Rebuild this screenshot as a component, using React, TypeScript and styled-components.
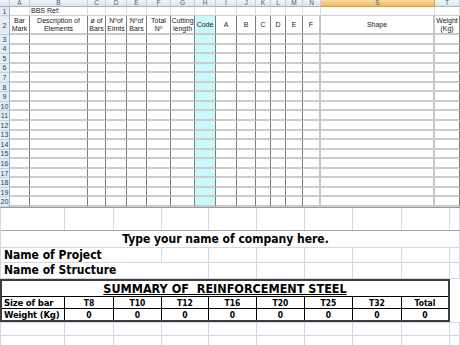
import React from 'react';
import styled, { createGlobalStyle } from 'styled-components';

const GlobalStyle = createGlobalStyle`
  html, body { margin: 0; padding: 0; background: #fff; }
  body {
    width: 460px;
    height: 345px;
    overflow: hidden;
    font-family: 'Liberation Sans', Arial, sans-serif;
  }
`;

interface ColDef {
  key: string;
  w: number;
  head: string[];
  code?: boolean;
  soft?: boolean;
  selected?: boolean;
}

const topCols: ColDef[] = [
  { key: 'A', w: 20, head: ['Bar', 'Mark'] },
  { key: 'B', w: 58, head: ['Description of', 'Elements'] },
  { key: 'C', w: 18, head: ['ø of', 'Bars'] },
  { key: 'D', w: 21, head: ['Nºof', 'Elmts'] },
  { key: 'E', w: 20, head: ['Nºof', 'Bars'] },
  { key: 'F', w: 24, head: ['Total', 'Nº'] },
  { key: 'G', w: 24, head: ['Cutting', 'length'] },
  { key: 'H', w: 21, head: ['Code'], code: true },
  { key: 'I', w: 21, head: ['A'] },
  { key: 'J', w: 19, head: ['B'] },
  { key: 'K', w: 15, head: ['C'] },
  { key: 'L', w: 15, head: ['D'] },
  { key: 'M', w: 17, head: ['E'] },
  { key: 'N', w: 18, head: ['F'], soft: true },
  { key: 'S', w: 114, head: ['Shape'], soft: true, selected: true },
  { key: 'T', w: 25, head: ['Weight', '(Kg)'] },
];

const dataRows = Array.from({ length: 18 }, (_, i) => i + 3);

const bars = ['T8', 'T10', 'T12', 'T16', 'T20', 'T25', 'T32', 'Total'];

const bottomCols = '64px 49px 48px 47px 48px 48px 48px 49px 48px 1fr';

const Sheet = styled.div`
  width: 460px;
  height: 345px;
  display: flex;
  flex-direction: column;
  overflow: hidden;
  background: #fff;
`;

/* ---------- top pane ---------- */

const TopPane = styled.div`
  display: grid;
  grid-template-columns: 10px ${topCols.map((c) => `${c.w}px`).join(' ')};
  grid-template-rows: 7px 9px 19px repeat(18, 1fr);
  height: 207px;
  flex: none;
`;

const ColHead = styled.div<{ $selected?: boolean }>`
  box-sizing: border-box;
  background: ${({ $selected }) =>
    $selected
      ? 'linear-gradient(#f9dba3, #f1b95b)'
      : 'linear-gradient(#f3f6fa, #dbe3ee)'};
  border-right: 1px solid ${({ $selected }) => ($selected ? '#e0a24a' : '#c3cedc')};
  border-bottom: 1px solid ${({ $selected }) => ($selected ? '#d99a3e' : '#9fb3cc')};
  color: #4a5d78;
  font-size: 6.5px;
  line-height: 6px;
  text-align: center;
`;

const RowHead = styled.div`
  box-sizing: border-box;
  background: #e4ebf5;
  border-right: 1px solid #9fb3cc;
  border-bottom: 1px solid #c4d0e0;
  color: #2b4262;
  font-size: 7px;
  display: flex;
  align-items: center;
  justify-content: center;
`;

const RefCell = styled.div`
  box-sizing: border-box;
  border-right: 1px solid #dcdcdc;
  border-bottom: 1px solid #cfcfcf;
  font-size: 7px;
  line-height: 8px;
  color: #222;
  white-space: nowrap;
  overflow: visible;
  padding-left: 1px;
`;

const HeadCell = styled.div<{ $code?: boolean; $soft?: boolean }>`
  box-sizing: border-box;
  background: ${({ $code }) => ($code ? '#c8fafa' : '#fff')};
  border-right: ${({ $soft }) => ($soft ? '2px solid #c6c6c6' : '1px solid #7d7d7d')};
  border-bottom: 2px solid #c9c9c9;
  font-size: 7px;
  line-height: 8px;
  color: #222;
  display: flex;
  flex-direction: column;
  align-items: center;
  justify-content: center;
  text-align: center;
  white-space: nowrap;
`;

const DataCell = styled.div<{ $code?: boolean; $soft?: boolean }>`
  box-sizing: border-box;
  background: ${({ $code }) => ($code ? '#c8fafa' : '#fff')};
  border-right: ${({ $soft }) => ($soft ? '2px solid #c6c6c6' : '1px solid #7d7d7d')};
  border-bottom: 2px solid #cccccc;
`;

/* ---------- bottom pane ---------- */

const BottomPane = styled.div`
  flex: 1;
  display: flex;
  flex-direction: column;
  border-top: 1px solid #9a9a9a;
  border-left: 1px solid #d0d7e5;
`;

const Row = styled.div<{ $h: number; $line?: string }>`
  display: grid;
  grid-template-columns: ${bottomCols};
  height: ${({ $h }) => $h}px;
  flex: none;
  border-bottom: 1px solid ${({ $line }) => $line || '#d0d7e5'};
  box-sizing: border-box;
`;

const Blank = styled.div`
  border-right: 1px solid #d0d7e5;
`;

const Heading = styled.div<{ $span: number; $center?: boolean }>`
  grid-column: span ${({ $span }) => $span};
  font-family: 'DejaVu Sans Condensed', 'DejaVu Sans', sans-serif;
  font-weight: bold;
  font-size: 12px;
  color: #000;
  white-space: nowrap;
  display: flex;
  align-items: flex-end;
  justify-content: ${({ $center }) => ($center ? 'center' : 'flex-start')};
  padding-left: ${({ $center }) => ($center ? 0 : 3)}px;
  line-height: 15px;
`;

const TableRow = styled.div`
  display: flex;
  height: 43px;
  flex: none;
  border-bottom: 1px solid #d0d7e5;
`;

const Summary = styled.div`
  box-sizing: border-box;
  width: 450px;
  margin-left: -1px;
  border: 2px solid #3d3d3d;
  display: flex;
  flex-direction: column;
  font-family: 'DejaVu Sans Condensed', 'DejaVu Sans', sans-serif;
  font-weight: bold;
  color: #000;
`;

const Title = styled.div`
  height: 15px;
  border-bottom: 1px solid #000;
  text-align: center;
  font-size: 12.5px;
  line-height: 16px;
  white-space: pre;
  text-decoration: underline;
  text-underline-offset: 1px;
  flex: none;
`;

const BarRow = styled.div<{ $last?: boolean }>`
  display: grid;
  grid-template-columns: 63px 49px 48px 47px 48px 48px 48px 49px 1fr;
  flex: 1;
  border-bottom: ${({ $last }) => ($last ? 'none' : '1px solid #000')};
`;

const BarCell = styled.div<{ $label?: boolean; $last?: boolean }>`
  border-right: ${({ $last }) => ($last ? 'none' : '1px solid #000')};
  font-size: ${({ $label }) => ($label ? 9.5 : 8.5)}px;
  letter-spacing: ${({ $label }) => ($label ? -0.2 : 0)}px;
  display: flex;
  align-items: center;
  justify-content: ${({ $label }) => ($label ? 'flex-start' : 'center')};
  padding-left: ${({ $label }) => ($label ? 2 : 0)}px;
  white-space: nowrap;
`;

const Filler = styled.div`
  flex: 1;
`;

const App: React.FC = () => (
  <Sheet>
    <GlobalStyle />
    <TopPane>
      <ColHead />
      {topCols.map((c) => (
        <ColHead key={c.key} $selected={c.selected}>
          {c.key}
        </ColHead>
      ))}

      <RowHead>1</RowHead>
      {topCols.map((c) => (
        <RefCell key={c.key}>{c.key === 'B' ? 'BBS Ref:' : ''}</RefCell>
      ))}

      <RowHead>2</RowHead>
      {topCols.map((c) => (
        <HeadCell key={c.key} $code={c.code} $soft={c.soft}>
          {c.head.map((line) => (
            <span key={line}>{line}</span>
          ))}
        </HeadCell>
      ))}

      {dataRows.map((r) => (
        <React.Fragment key={r}>
          <RowHead>{r}</RowHead>
          {topCols.map((c) => (
            <DataCell key={c.key} $code={c.code} $soft={c.soft} />
          ))}
        </React.Fragment>
      ))}
    </TopPane>

    <BottomPane>
      <Row $h={23} $line="#a8a8a8">
        {Array.from({ length: 10 }, (_, i) => (
          <Blank key={i} />
        ))}
      </Row>
      <Row $h={17}>
        <Heading $span={9} $center>
          Type your name of company here.
        </Heading>
        <Blank />
      </Row>
      <Row $h={15}>
        <Heading $span={2}>Name of Project</Heading>
        {Array.from({ length: 8 }, (_, i) => (
          <Blank key={i} />
        ))}
      </Row>
      <Row $h={16}>
        <Heading $span={3}>Name of Structure</Heading>
        {Array.from({ length: 7 }, (_, i) => (
          <Blank key={i} />
        ))}
      </Row>
      <TableRow>
        <Summary>
          <Title>SUMMARY OF  REINFORCEMENT STEEL</Title>
          <BarRow>
            <BarCell $label>Size of bar</BarCell>
            {bars.map((b, i) => (
              <BarCell key={b} $last={i === bars.length - 1}>
                {b}
              </BarCell>
            ))}
          </BarRow>
          <BarRow $last>
            <BarCell $label>Weight (Kg)</BarCell>
            {bars.map((b, i) => (
              <BarCell key={b} $last={i === bars.length - 1}>
                0
              </BarCell>
            ))}
          </BarRow>
        </Summary>
        <Filler />
      </TableRow>
      <Row $h={13}>
        {Array.from({ length: 10 }, (_, i) => (
          <Blank key={i} />
        ))}
      </Row>
      <Row $h={13}>
        {Array.from({ length: 10 }, (_, i) => (
          <Blank key={i} />
        ))}
      </Row>
    </BottomPane>
  </Sheet>
);

export default App;
